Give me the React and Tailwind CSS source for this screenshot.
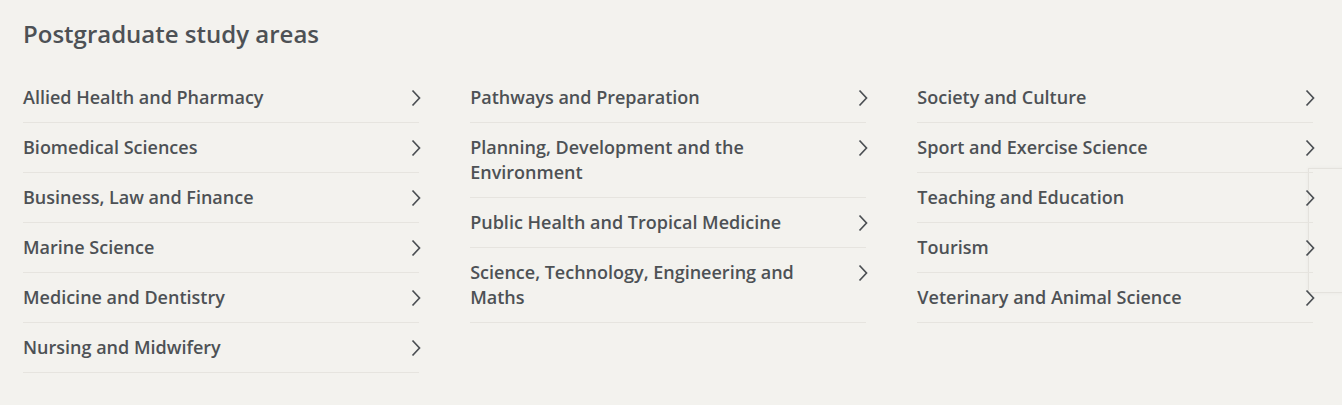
import React from 'react';

const columns = [
  [
    'Allied Health and Pharmacy',
    'Biomedical Sciences',
    'Business, Law and Finance',
    'Marine Science',
    'Medicine and Dentistry',
    'Nursing and Midwifery',
  ],
  [
    'Pathways and Preparation',
    'Planning, Development and the Environment',
    'Public Health and Tropical Medicine',
    'Science, Technology, Engineering and Maths',
  ],
  [
    'Society and Culture',
    'Sport and Exercise Science',
    'Teaching and Education',
    'Tourism',
    'Veterinary and Animal Science',
  ],
];

const Chevron = () => (
  <svg width="12" height="18" viewBox="0 0 12 18" fill="none" className="shrink-0 mt-[4px] mr-[-3px]">
    <path d="M2.5 1.5 L9.5 9 L2.5 16.5" stroke="#4b4f53" strokeWidth="1.7" />
  </svg>
);

const App = () => {
  return (
    <div
      className="relative w-[1342px] h-[405px] bg-[#f3f2ee] text-[#4d5155] overflow-hidden"
      style={{ fontFamily: '"Open Sans", sans-serif' }}
    >
      <div className="absolute left-[1308px] top-[168px] w-[60px] h-[125px] border border-[#e4e2dd] shadow-[0_0_4px_rgba(0,0,0,0.04)]"></div>
      <div className="relative pl-[23px] pt-[17px] w-[1313px]">
        <h2 className="text-[24px] leading-[34px] font-semibold mb-[22px]">Postgraduate study areas</h2>
        <div className="grid grid-cols-3 gap-x-[51.5px]">
          {columns.map((col, i) => (
            <ul key={i}>
              {col.map((item) => (
                <li
                  key={item}
                  className="flex items-start justify-between border-b border-[#e6e4df] pt-[12px] pb-[12px]"
                >
                  <span className="text-[18px] leading-[25px] font-semibold pr-[40px]">{item}</span>
                  <Chevron />
                </li>
              ))}
            </ul>
          ))}
        </div>
      </div>
    </div>
  );
};

export default App;
